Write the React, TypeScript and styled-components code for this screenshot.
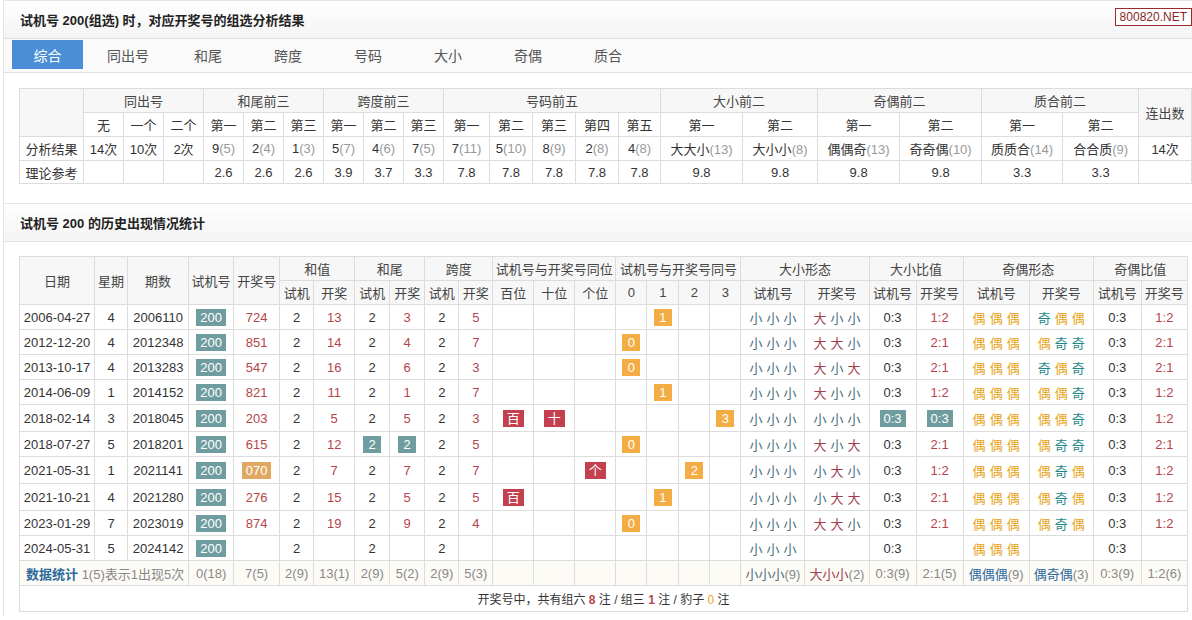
import React from "react";
import styled, { createGlobalStyle } from "styled-components";

const Global = createGlobalStyle`
  html, body { margin: 0; padding: 0; background: #fff; }
  body { font-family: "Liberation Sans", "Noto Sans CJK SC", sans-serif; font-size: 12px; color: #333; }
`;

const Page = styled.div`
  box-sizing: border-box;
  border-left: 1px solid #e3e3e3;
  margin-left: 3px;
  width: 1189px;
`;
const TitleBar = styled.div<{ $h: number }>`
  height: ${p => p.$h}px;
  display: flex;
  align-items: center;
  padding-left: 16px;
  background: linear-gradient(#ffffff, #f4f4f4);
  border-top: 1px solid #e6e6e6;
  border-bottom: 1px solid #e2e2e2;
  font-weight: bold;
  font-size: 13px;
  color: #222;
  position: relative;
`;
const Mark = styled.div`
  position: absolute;
  right: 0;
  top: 7px;
  border: 1px solid #9b2a2a;
  color: #8b1f1f;
  font-weight: normal;
  font-size: 12px;
  padding: 1px 4px;
  background: #fff;
`;
const Tabs = styled.div`
  display: flex;
  padding: 1px 0 0 8px;
  height: 32px;
  border-bottom: 1px solid #e2e2e2;
  background: #fafafa;
`;
const Tab = styled.div<{ $active?: boolean }>`
  width: 80px;
  height: 29px;
  display: flex;
  align-items: center;
  justify-content: center;
  font-size: 14px;
  color: ${p => (p.$active ? "#fff" : "#555")};
  background: ${p => (p.$active ? "#4a8fd6" : "transparent")};
  &:first-child { width: 71px; margin-right: 5px; }
`;
const Wrap = styled.div<{ $t: number; $b: number }>`
  padding: ${p => p.$t}px 4px ${p => p.$b}px 15px;
`;
const Table = styled.table`
  border-collapse: collapse;
  table-layout: fixed;
  width: 1169px;
  & td, & th {
    border: 1px solid #dcdcdc;
    text-align: center;
    font-weight: normal;
    padding: 0;
    white-space: nowrap;
    overflow: hidden;
  }
`;
const HRow = styled.tr<{ $h: number }>`
  height: ${p => p.$h}px;
  background: #f7f7f7;
  color: #444;
  font-size: 13px;
`;
const Row = styled.tr<{ $h: number; $bg?: string }>`
  height: ${p => p.$h}px;
  background: ${p => p.$bg || "#fff"};
  font-size: 13px;
`;
const Par = styled.span`color: #999;`;
const Red = styled.span`color: #b5454b;`;
const Badge = styled.span<{ $c: string }>`
  display: inline-block;
  background: ${p => p.$c};
  color: #fff;
  padding: 0 4px;
  line-height: 17px;
  min-width: 10px;
`;
const Ch = styled.span<{ $c: string }>`color: ${p => p.$c}; margin: 0 2px;`;
const StatTitle = styled.b`color: #2e6a9e; font-weight: bold;`;
const Gray = styled.span`color: #888;`;
const Tint = styled.span<{ $c: string }>`color: ${p => p.$c};`;
const Foot = styled.td`font-size: 12px;`;

const TEAL = "#6f9d9f", ORANGE = "#f4ad44", RED = "#c4404f", TAN = "#e0a860";
const chColor = (c: string) =>
  c === "大" ? "#a0404f" : c === "小" ? "#4d6f80" : c === "偶" ? "#e7a418" : "#1f8a8a";
const Chars = ({ s }: { s: string }) => (
  <>{s.split("").map((c, i) => <Ch key={i} $c={chColor(c)}>{c}</Ch>)}</>
);

const t1cols = [64, 40, 40, 40, 40, 40, 40, 40, 40, 40, 46, 43, 43, 43, 42, 82, 75, 82, 82, 81, 76, 53];
const t2cols = [75, 33, 61, 45, 46, 34, 41, 35, 35, 34, 34, 41, 41, 41, 31, 32, 31, 31, 64, 64, 47, 47, 66, 64, 48, 46];

type R = {
  d: string; w: string; q: string; kj?: string; kjB?: boolean; hz?: string; hw?: string; hwB?: boolean; kd?: string;
  pos?: string[]; same?: number; dx?: string; dxb?: string; dxbB?: boolean; jo?: string; job?: string;
};
const rows: R[] = [
  { d: "2006-04-27", w: "4", q: "2006110", kj: "724", hz: "13", hw: "3", kd: "5", same: 1, dx: "大小小", dxb: "1:2", jo: "奇偶偶", job: "1:2" },
  { d: "2012-12-20", w: "4", q: "2012348", kj: "851", hz: "14", hw: "4", kd: "7", same: 0, dx: "大大小", dxb: "2:1", jo: "偶奇奇", job: "2:1" },
  { d: "2013-10-17", w: "4", q: "2013283", kj: "547", hz: "16", hw: "6", kd: "3", same: 0, dx: "大小大", dxb: "2:1", jo: "奇偶奇", job: "2:1" },
  { d: "2014-06-09", w: "1", q: "2014152", kj: "821", hz: "11", hw: "1", kd: "7", same: 1, dx: "大小小", dxb: "1:2", jo: "偶偶奇", job: "1:2" },
  { d: "2018-02-14", w: "3", q: "2018045", kj: "203", hz: "5", hw: "5", kd: "3", pos: ["百", "十", ""], same: 3, dx: "小小小", dxb: "0:3", dxbB: true, jo: "偶偶奇", job: "1:2" },
  { d: "2018-07-27", w: "5", q: "2018201", kj: "615", hz: "12", hw: "2", hwB: true, kd: "5", same: 0, dx: "大小大", dxb: "2:1", jo: "偶奇奇", job: "2:1" },
  { d: "2021-05-31", w: "1", q: "2021141", kj: "070", kjB: true, hz: "7", hw: "7", kd: "7", pos: ["", "", "个"], same: 2, dx: "小大小", dxb: "1:2", jo: "偶奇偶", job: "1:2" },
  { d: "2021-10-21", w: "4", q: "2021280", kj: "276", hz: "15", hw: "5", kd: "5", pos: ["百", "", ""], same: 1, dx: "小大大", dxb: "2:1", jo: "偶奇偶", job: "1:2" },
  { d: "2023-01-29", w: "7", q: "2023019", kj: "874", hz: "19", hw: "9", kd: "4", same: 0, dx: "大大小", dxb: "2:1", jo: "偶奇偶", job: "1:2" },
  { d: "2024-05-31", w: "5", q: "2024142" },
];

const top = [
  ["9", "5"], ["2", "4"], ["1", "3"], ["5", "7"], ["4", "6"], ["7", "5"],
  ["7", "11"], ["5", "10"], ["8", "9"], ["2", "8"], ["4", "8"],
  ["大大小", "13"], ["大小小", "8"], ["偶偶奇", "13"], ["奇奇偶", "10"], ["质质合", "14"], ["合合质", "9"],
];
const ref = ["2.6", "2.6", "2.6", "3.9", "3.7", "3.3", "7.8", "7.8", "7.8", "7.8", "7.8", "9.8", "9.8", "9.8", "9.8", "3.3", "3.3"];
const D = ["第一", "第二", "第三", "第四", "第五"];

export default function App() {
  return (
    <Page>
      <Global />
      <TitleBar $h={37}>试机号 200(组选) 时，对应开奖号的组选分析结果<Mark>800820.NET</Mark></TitleBar>
      <Tabs>
        {["综合", "同出号", "和尾", "跨度", "号码", "大小", "奇偶", "质合"].map((t, i) => (
          <Tab key={t} $active={i === 0}>{t}</Tab>
        ))}
      </Tabs>
      <Wrap $t={15} $b={19}>
        <Table>
          <colgroup>{t1cols.map((w, i) => <col key={i} style={{ width: w }} />)}</colgroup>
          <tbody>
            <HRow $h={24}>
              <th rowSpan={2}></th>
              <th colSpan={3}>同出号</th>
              <th colSpan={3}>和尾前三</th>
              <th colSpan={3}>跨度前三</th>
              <th colSpan={5}>号码前五</th>
              <th colSpan={2}>大小前二</th>
              <th colSpan={2}>奇偶前二</th>
              <th colSpan={2}>质合前二</th>
              <th rowSpan={2}>连出数</th>
            </HRow>
            <Row $h={24}>
              <td>无</td><td>一个</td><td>二个</td>
              {D.slice(0, 3).map(d => <td key={"a" + d}>{d}</td>)}
              {D.slice(0, 3).map(d => <td key={"b" + d}>{d}</td>)}
              {D.map(d => <td key={"c" + d}>{d}</td>)}
              {[0, 1, 2].map(k => <React.Fragment key={k}><td>第一</td><td>第二</td></React.Fragment>)}
            </Row>
            <Row $h={24}>
              <td>分析结果</td><td>14次</td><td>10次</td><td>2次</td>
              {top.map(([a, b], i) => <td key={i}>{a}<Par>({b})</Par></td>)}
              <td>14次</td>
            </Row>
            <Row $h={23}>
              <td>理论参考</td><td></td><td></td><td></td>
              {ref.map((v, i) => <td key={i}>{v}</td>)}
              <td></td>
            </Row>
          </tbody>
        </Table>
      </Wrap>
      <TitleBar $h={37}>试机号 200 的历史出现情况统计</TitleBar>
      <Wrap $t={14} $b={4}>
        <Table>
          <colgroup>{t2cols.map((w, i) => <col key={i} style={{ width: w }} />)}</colgroup>
          <tbody>
            <HRow $h={24}>
              <th rowSpan={2}>日期</th><th rowSpan={2}>星期</th><th rowSpan={2}>期数</th>
              <th rowSpan={2}>试机号</th><th rowSpan={2}>开奖号</th>
              <th colSpan={2}>和值</th><th colSpan={2}>和尾</th><th colSpan={2}>跨度</th>
              <th colSpan={3}>试机号与开奖号同位</th><th colSpan={4}>试机号与开奖号同号</th>
              <th colSpan={2}>大小形态</th><th colSpan={2}>大小比值</th>
              <th colSpan={2}>奇偶形态</th><th colSpan={2}>奇偶比值</th>
            </HRow>
            <HRow $h={24}>
              {[0, 1, 2].map(k => <React.Fragment key={k}><th>试机</th><th>开奖</th></React.Fragment>)}
              <th>百位</th><th>十位</th><th>个位</th>
              <th>0</th><th>1</th><th>2</th><th>3</th>
              {[0, 1, 2, 3].map(k => <React.Fragment key={k}><th>试机号</th><th>开奖号</th></React.Fragment>)}
            </HRow>
            {rows.map(r => (
              <Row key={r.d} $h={r.pos ? 27 : 25}>
                <td>{r.d}</td><td>{r.w}</td><td>{r.q}</td>
                <td><Badge $c={TEAL}>200</Badge></td>
                <td>{r.kj && (r.kjB ? <Badge $c={TAN}>{r.kj}</Badge> : <Red>{r.kj}</Red>)}</td>
                <td>2</td><td><Red>{r.hz}</Red></td>
                <td>{r.hwB ? <Badge $c={TEAL}>2</Badge> : "2"}</td>
                <td>{r.hwB ? <Badge $c={TEAL}>{r.hw}</Badge> : <Red>{r.hw}</Red>}</td>
                <td>2</td><td><Red>{r.kd}</Red></td>
                {[0, 1, 2].map(k => (
                  <td key={"p" + k}>{r.pos && r.pos[k] ? <Badge $c={RED}>{r.pos[k]}</Badge> : null}</td>
                ))}
                {[0, 1, 2, 3].map(k => (
                  <td key={"s" + k}>{r.same === k ? <Badge $c={ORANGE}>{k}</Badge> : null}</td>
                ))}
                <td><Chars s="小小小" /></td>
                <td>{r.dx && <Chars s={r.dx} />}</td>
                <td>{r.dxbB ? <Badge $c={TEAL}>0:3</Badge> : "0:3"}</td>
                <td>{r.dxbB ? <Badge $c={TEAL}>0:3</Badge> : <Red>{r.dxb}</Red>}</td>
                <td><Chars s="偶偶偶" /></td>
                <td>{r.jo && <Chars s={r.jo} />}</td>
                <td>0:3</td>
                <td><Red>{r.job}</Red></td>
              </Row>
            ))}
            <Row $h={25} $bg="#fdfbf6">
              <td colSpan={3} style={{ textAlign: "left", paddingLeft: 6 }}>
                <StatTitle>数据统计</StatTitle> <Gray>1(5)表示1出现5次</Gray>
              </td>
              {["0(18)", "7(5)", "2(9)", "13(1)", "2(9)", "5(2)", "2(9)", "5(3)"].map((v, i) => <td key={i}><Gray>{v}</Gray></td>)}
              {[0, 1, 2, 3, 4, 5, 6].map(k => <td key={"e" + k}></td>)}
              <td><Tint $c="#4d6f80">小小小</Tint><Gray>(9)</Gray></td>
              <td><Tint $c="#a0404f">大小小</Tint><Gray>(2)</Gray></td>
              <td><Gray>0:3(9)</Gray></td>
              <td><Gray>2:1(5)</Gray></td>
              <td><Tint $c="#2e6a9e">偶偶偶</Tint><Gray>(9)</Gray></td>
              <td><Tint $c="#2e6a9e">偶奇偶</Tint><Gray>(3)</Gray></td>
              <td><Gray>0:3(9)</Gray></td>
              <td><Gray>1:2(6)</Gray></td>
            </Row>
            <Row $h={26}>
              <Foot colSpan={26}>
                开奖号中，共有组六 <Red as="b">8</Red> 注 / 组三 <Red as="b">1</Red> 注 / 豹子 <Tint $c="#f0a030">0</Tint> 注
              </Foot>
            </Row>
          </tbody>
        </Table>
      </Wrap>
    </Page>
  );
}
